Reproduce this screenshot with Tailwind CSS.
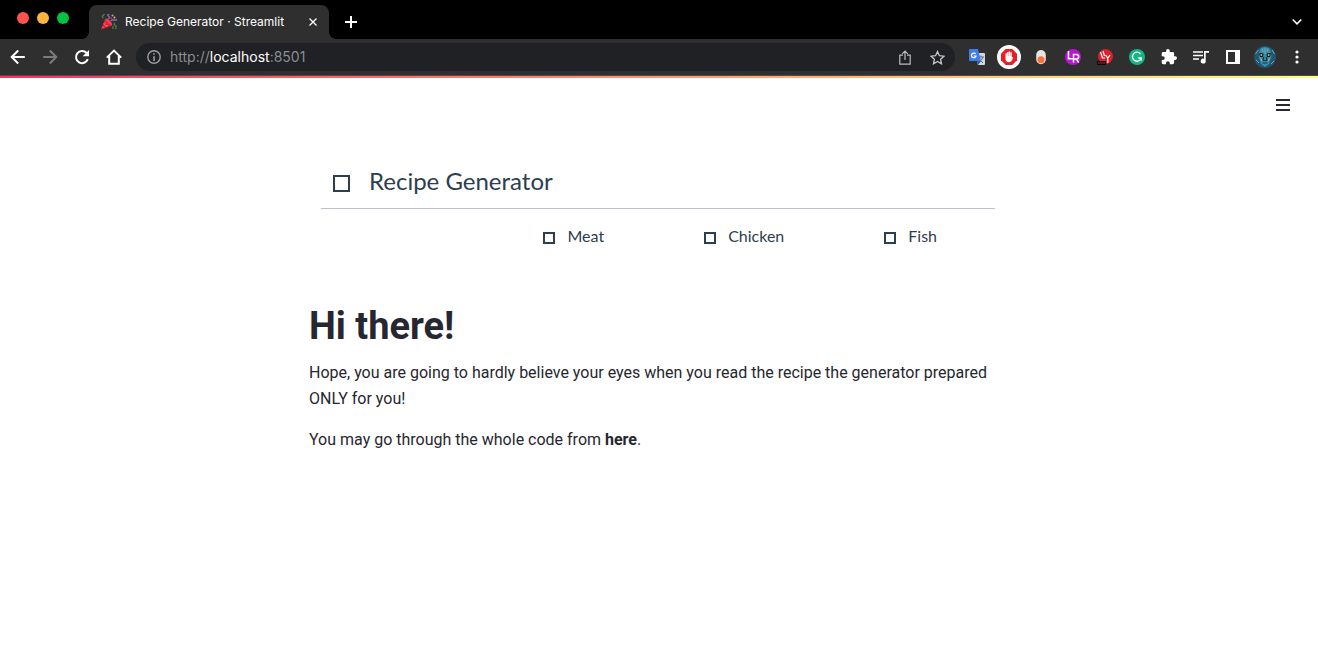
<!DOCTYPE html>
<html lang="en">
<head>
<meta charset="utf-8">
<title>Recipe Generator · Streamlit</title>
<script src="https://cdn.jsdelivr.net/npm/@tailwindcss/browser@4"></script>
</head>
<body class="min-h-screen bg-white font-['Roboto',sans-serif] text-[#262730]">
<header>
  <div class="flex h-[39px] items-end bg-black pr-[11px] font-['Inter',sans-serif] text-white">
    <div class="flex h-full w-[89px] items-center gap-2 pb-[3px] pl-[17px]">
      <button aria-label="Close window" class="size-3 rounded-full bg-[#ff544d]"></button>
      <button aria-label="Minimize" class="size-3 rounded-full bg-[#ffb43c]"></button>
      <button aria-label="Zoom" class="size-3 rounded-full bg-[#00c245]"></button>
    </div>
    <div class="relative flex h-[34px] w-60 items-center rounded-t-lg bg-[#2f2f2f] pl-3">
      <span class="absolute bottom-0 -left-2 size-2 bg-[radial-gradient(circle_at_0_0,#000_8px,#2f2f2f_8px)]"></span>
      <span class="absolute -right-2 bottom-0 size-2 bg-[radial-gradient(circle_at_100%_0,#000_8px,#2f2f2f_8px)]"></span>
      <svg class="size-4 shrink-0" viewBox="0 0 16 16" fill="none">
        <path d="M0 15.5 4.2 4.8Q9 6 11.2 11.5Z" fill="#e01f3d"/>
        <path d="M4.2 4.8Q5 9.5 11.2 11.5Q11.7 9 8.9 6.500T4.2 4.8Z" fill="#f23c50"/>
        <path d="M2.5 9.5 5.8 13M1.2 12.6l2 1.6" stroke="#ff7481" stroke-width=".8"/>
        <path d="M2.500 4Q.5 3 2 1.500T3.500 0M14 9q-2 1 0 2.300t.5 3.700M12 12v3" stroke="#3f8a48" stroke-width="1.300"/>
        <path d="M7 5Q9.500 4 7.500 2T8.500 0M10 7q1-2 3-1t3-1" stroke="#8065bd" stroke-width="1.500"/>
        <circle cx="11.500" cy="1.500" r="1" fill="#dba64e"/><circle cx="13.500" cy="3.500" r="1" fill="#e3b35f"/><circle cx="10.200" cy="4" r=".8" fill="#b9553c"/><circle cx="4" cy="9" r=".6" fill="#ffc05a"/><circle cx="6" cy="11.500" r=".6" fill="#ffc05a"/>
      </svg>
      <span class="ml-2 flex-1 text-xs whitespace-nowrap">Recipe Generator · Streamlit</span>
      <button aria-label="Close tab" class="mr-2 grid size-4 place-items-center"><svg class="size-2" viewBox="0 0 8 8" stroke="#fff" stroke-width="1.3"><path d="m.5.5 7 7m0-7-7 7"/></svg></button>
    </div>
    <button aria-label="New tab" class="ml-3 grid h-[34px] w-5 place-items-center"><svg class="size-3" viewBox="0 0 12 12" stroke="#fff" stroke-width="2"><path d="M6 0v12M0 6h12"/></svg></button>
    <button aria-label="Search tabs" class="ml-auto grid h-[34px] w-5 place-items-center"><svg class="h-2 w-[10px]" viewBox="0 0 10 8" fill="none" stroke="#fff" stroke-width="1.6"><path d="m.7 1.500 4.300 4.300 4.300-4.300"/></svg></button>
  </div>
  <div class="flex h-[37px] items-center border-b border-[#4a4a4a] bg-[#2f2f2f] pr-[5px] pl-[2px] text-white">
    <button aria-label="Back" class="grid w-8 place-items-center"><svg class="size-4" viewBox="0 0 16 16" fill="none" stroke="#fff" stroke-width="2"><path d="M14.8 8H2M8.2 1.5 1.7 8l6.5 6.5"/></svg></button>
    <button aria-label="Forward" class="grid w-8 place-items-center"><svg class="size-4" viewBox="0 0 16 16" fill="none" stroke="#7c7c7c" stroke-width="2"><path d="M1.2 8H14M7.8 1.5 14.3 8l-6.5 6.5"/></svg></button>
    <button aria-label="Reload" class="grid w-8 place-items-center"><svg class="size-4" viewBox="0 0 16 16" fill="none"><path d="M13.8 10.2A6.1 6.1 0 1 1 12.5 3.8L14 5.5" stroke="#fff" stroke-width="2"/><path d="M15 1v6.3H8.7Z" fill="#fff"/></svg></button>
    <button aria-label="Home" class="grid w-8 place-items-center"><svg class="size-4" viewBox="0 0 16 16" fill="none" stroke="#fff" stroke-width="2"><path d="M.8 8.6 8 1.6l7.2 7M3.2 7v7.7h9.6V7"/></svg></button>
    <div class="mx-[6px] flex h-7 flex-1 items-center rounded-full bg-[#1f2124] pr-2 pl-[11px]">
      <svg class="size-[14px]" viewBox="0 0 14 14" fill="none" stroke="#9b9fa5"><circle cx="7" cy="7" r="6.2" stroke-width="1.4"/><path d="M7 6.2V11M7 3.2v1.6" stroke-width="1.6"/></svg>
      <a href="http://localhost:8501" class="ml-[9px] flex-1 font-['Inter',sans-serif] text-sm text-[#8b8e92]">http://<span class="text-white">localhost</span>:8501</a>
      <button aria-label="Share" class="mr-3 grid size-5 place-items-center"><svg class="h-[15px] w-3" viewBox="0 0 12 15" fill="none" stroke="#b9bbbe" stroke-width="1.2"><path d="M4 5.2H.8v8.9h10.4V5.2H8M6 10V1.3M3.2 3.9 6 1.1l2.8 2.8"/></svg></button>
      <button aria-label="Bookmark" class="grid size-5 place-items-center"><svg class="size-[15px]" viewBox="0 0 15 15" fill="none" stroke="#c5c7ca" stroke-width="1.3"><path d="m7.5 1.5 1.9 4.2 4.6.5-3.4 3.1.9 4.5-4-2.3-4 2.3.9-4.5L1 6.2l4.6-.5Z"/></svg></button>
    </div>
    <button aria-label="Translate" class="grid w-8 place-items-center"><svg class="size-4" viewBox="0 0 16 16"><path d="M6 4h9q1 0 1 1v10q0 1-1 1H9Z" fill="#d5d7d9"/><path d="M9 8h6M12 6.5V8m2 0q-1 3.5-4 5m0-3 4 4" stroke="#5b7185" fill="none"/><path d="M1 0h8l3 12H1q-1 0-1-1V1q0-1 1-1" fill="#3f7ee8"/><path d="m8 12 4 0-3 4Z" fill="#2855b8"/><path d="M6.6 5A2.3 2.3 0 1 0 7 7H4.8" fill="none" stroke="#fff" stroke-width="1.2"/></svg></button>
    <button aria-label="Content blocker" class="grid w-8 place-items-center"><svg class="size-6" viewBox="0 0 24 24"><circle cx="12" cy="12" r="12" fill="#fff"/><path d="M8.7 4h6.6L20 8.7v6.6L15.3 20H8.7L4 15.3V8.7Z" fill="#ed1c24"/><path d="M8.500 12V8.500q.6-.8 1.300 0V11h.3V7.200q.7-.8 1.400 0V11h.3V6.600q.7-.8 1.400 0V11h.3V7.600q.7-.8 1.300 0v4.900l.8-.6q.8 0 .4 1l-1.200 2.900q-.8 1.400-2.800 1.400-3.500 0-3.500-3.400Z" fill="#fff"/></svg></button>
    <button aria-label="Toggle extension" class="grid w-8 place-items-center"><svg class="h-4 w-[10px]" viewBox="0 0 10 16"><rect x=".2" y="1" width="9.6" height="14.2" rx="4.8" fill="#e4e4e4"/><circle cx="5" cy="10.8" r="3.5" fill="#ff7034"/></svg></button>
    <button aria-label="LR extension" class="grid w-8 place-items-center"><svg class="size-4" viewBox="0 0 16 16" fill="none"><circle cx="8" cy="8" r="8" fill="#b915d3"/><path d="M3.500 2v7.800h5M8.500 13.500V5.500h3a2.200 2.200 0 0 1 0 4.400H8.800m2.200 0 2.800 3.600" stroke="#fff" stroke-width="1.500"/></svg></button>
    <button aria-label="LY extension" class="grid w-8 place-items-center"><svg class="size-4" viewBox="0 0 16 16" fill="none"><circle cx="8.500" cy="7.500" r="7.500" fill="#dc1f2b"/><path d="M0 12h9v4H0Z" fill="#0c0c0c"/><path d="m3.500 3 2 6h2.500M6 2l1.500 5M8.500 6l2.300 3.200L13 6m-2.200 3v5" stroke="#fff" stroke-width="1.200"/><path d="M1 14h7" stroke="#b3202b"/></svg></button>
    <button aria-label="Grammar" class="grid w-8 place-items-center"><svg class="size-4" viewBox="0 0 16 16" fill="none"><circle cx="8" cy="8" r="8" fill="#11b886"/><path d="M11.5 4.9A4.5 4.5 0 1 0 12.3 9H9.2M12.3 8.6v3" stroke="#fff" stroke-width="1.3"/></svg></button>
    <button aria-label="Extensions" class="grid w-8 place-items-center"><svg class="size-4" viewBox="1 1 22 22" fill="#fff"><path d="M20.5 11H19V7a2 2 0 0 0-2-2h-4V3.500a2.500 2.500 0 0 0-5 0V5H4a2 2 0 0 0-2 2v3.800h1.500a2.700 2.700 0 0 1 0 5.400H2V20a2 2 0 0 0 2 2h3.800v-1.500a2.700 2.700 0 0 1 5.400 0V22H17a2 2 0 0 0 2-2v-4h1.500a2.500 2.500 0 0 0 0-5Z"/></svg></button>
    <button aria-label="Media controls" class="grid w-8 place-items-center"><svg class="h-[14px] w-4" viewBox="0 0 16 14"><path d="M0 2h10M0 5.500h10M0 9h6" stroke="#fff" stroke-width="1.500"/><path d="M11 1h5v1.800h-3.300V11a2.500 2.500 0 1 1-1.700-2.300Z" fill="#fff"/></svg></button>
    <button aria-label="Side panel" class="grid w-8 place-items-center"><svg class="size-[14px]" viewBox="0 0 14 14"><path d="M0 0h14v14H0ZM2 2v10h7V2Z" fill="#fff" fill-rule="evenodd"/></svg></button>
    <button aria-label="Profile" class="grid w-8 place-items-center"><svg class="size-[22px]" viewBox="0 0 22 22" fill="none"><circle cx="11" cy="11" r="11" fill="#23566e"/><path d="M6 3q5-4 10 0l1.500 7-2.500 8-4 3-4-3-2.500-8Z" fill="#3c8ca9"/><path d="M1.500 8l3-4M2 14l3 3m13-13 2.500 4m-.5 7-3 3M8 2.500l1 3.500m5-3.500-1 3.500M11 2v6" stroke="#62adc4" stroke-width="1"/><path d="M5 7.500q2.500-1 4.500.5L9 11H6Zm12 0q-2.500-1-4.500.5L13 11h3Z" fill="#0a1d28"/><path d="m9.800 11-.8 3.500h4l-.8-3.500M8.500 17h5" stroke="#123445" stroke-width="1.200"/><path d="M6.500 12.500 8 15m7.500-2.500L14 15" stroke="#82c7d8"/><circle cx="7.300" cy="9" r="1" fill="#f0a342"/><circle cx="14.700" cy="9" r="1" fill="#f0a342"/></svg></button>
    <button aria-label="Browser menu" class="grid w-8 place-items-center"><svg class="h-[14px] w-1" viewBox="0 0 4 14" fill="#fff"><circle cx="2" cy="2" r="1.600"/><circle cx="2" cy="7" r="1.600"/><circle cx="2" cy="12" r="1.600"/></svg></button>
  </div>
  <div class="h-[2px] bg-[linear-gradient(to_right,#ff2e5f,#fffd80)]"></div>
  <div class="flex justify-end px-7 pt-5">
    <button aria-label="Menu" class="h-[14px] w-[14px]"><svg class="size-full" viewBox="0 0 14 14" stroke="#262730" stroke-width="2"><path d="M0 2h14M0 7h14M0 12h14"/></svg></button>
  </div>
</header>
<main class="mx-auto max-w-[704px] px-[2px]">
  <form class="mr-[14px] ml-3 mt-[49px] font-['Lato',sans-serif] text-[#2c3e50]">
    <label class="flex items-center gap-[19px] border-b border-[#bfc2cc] pb-[7px] pl-3">
      <input type="checkbox" class="mt-1 size-[17px] appearance-none border-2 border-current checked:bg-current">
      <span class="text-2xl leading-10">Recipe Generator</span>
    </label>
    <div class="flex justify-end gap-[100px] pt-[15px] pr-[58px] text-base">
      <label class="flex items-center gap-3"><input type="checkbox" class="mt-1 size-[12px] appearance-none border-2 border-current checked:bg-current">Meat</label>
      <label class="flex items-center gap-3"><input type="checkbox" class="mt-1 size-[12px] appearance-none border-2 border-current checked:bg-current">Chicken</label>
      <label class="flex items-center gap-3"><input type="checkbox" class="mt-1 size-[12px] appearance-none border-2 border-current checked:bg-current">Fish</label>
    </div>
  </form>
  <h1 class="mt-[54px] text-[38px] leading-[48px] font-bold">Hi there!</h1>
  <p class="mt-[10px] text-base leading-[26px]">Hope, you are going to hardly believe your eyes when you read the recipe the generator prepared ONLY for you!</p>
  <p class="mt-[15px] text-base leading-[26px]">You may go through the whole code from <a href="#" class="font-bold">here</a>.</p>
</main>
</body>
</html>
